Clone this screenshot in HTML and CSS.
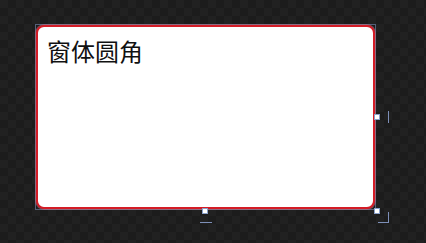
FILE: index.html
```html
<!DOCTYPE html>
<html>
<head>
<meta charset="utf-8">
<link rel="stylesheet" href="styles.css">
</head>
<body>
<div class="stage">
  <div class="selection">
    <div class="form">
      <div class="title">窗体圆角</div>
    </div>
    <span class="handle h-right"></span>
    <span class="handle h-bottom"></span>
    <span class="handle h-corner"></span>
    <span class="guide g-right"></span>
    <span class="guide g-bottom"></span>
    <span class="guide g-corner"></span>
  </div>
</div>
</body>
</html>
```
FILE: styles.css
```css
html, body {
  margin: 0;
  padding: 0;
}
body {
  width: 426px;
  height: 243px;
  overflow: hidden;
  background-color: #1e1e1e;
  background-image: repeating-conic-gradient(#1c1c1c 0 25%, #212121 0 50%);
  background-size: 16px 16px;
  font-family: "Noto Sans CJK SC", "Noto Sans", sans-serif;
}
.stage {
  padding: 24px 0 0 35px;
}
.selection {
  position: relative;
  width: 341px;
  height: 186px;
  border: 1px solid #56607a;
  box-sizing: border-box;
  padding: 0;
}
.form {
  box-sizing: border-box;
  width: 339px;
  height: 184px;
  background: #ffffff;
  border: 2px solid #d41c26;
  border-radius: 8px;
  box-shadow: 0 0 0 1px rgba(190, 120, 140, 0.5);
  padding: 9px 9px;
}
.title {
  font-size: 24px;
  line-height: 30px;
  color: #111;
}
.handle {
  position: absolute;
  width: 4px;
  height: 4px;
  background: #ffffff;
  border: 1px solid #8aa0c8;
}
.h-right { left: 338px; top: 89px; }
.h-bottom { left: 166px; top: 183px; }
.h-corner { left: 338px; top: 183px; }
.guide {
  position: absolute;
  background: #7d8fb8;
}
.g-right { left: 352px; top: 86px; width: 1px; height: 12px; }
.g-bottom { left: 164px; top: 197px; width: 12px; height: 1px; }
.g-corner {
  left: 342px; top: 187px; width: 10px; height: 10px;
  background: transparent;
  border-right: 1px solid #7d8fb8;
  border-bottom: 1px solid #7d8fb8;
}
```
